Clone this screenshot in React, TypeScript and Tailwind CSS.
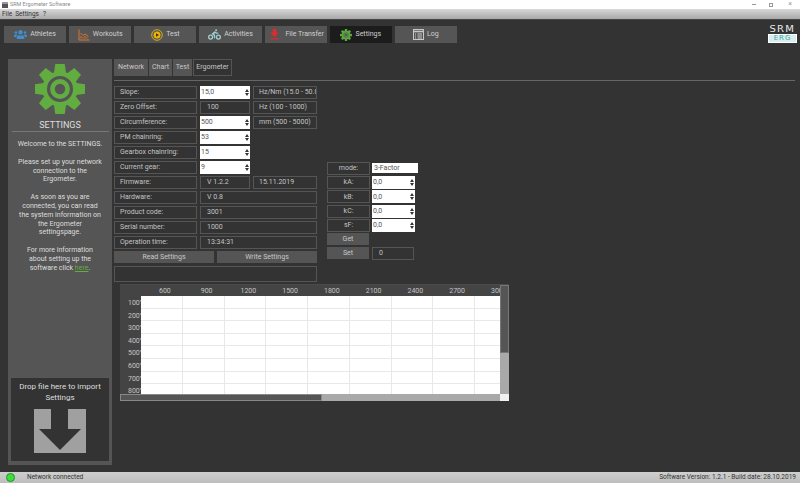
import { ReactNode } from "react";
import { FaUsers, FaBiking } from "react-icons/fa";
import { MdFileDownload } from "react-icons/md";

const font = { fontFamily: 'Roboto, "Noto Sans", sans-serif' };

function Gear({ size, color, stroke }: { size: number; color: string; stroke: number }) {
  const teeth = [0, 45, 90, 135, 180, 225, 270, 315];
  return (
    <svg width={size} height={size} viewBox="0 0 48 48">
      {teeth.map((a) => (
        <path key={a} d="M19.5 0 H28.5 L30 10 H18 Z" fill={color} transform={`rotate(${a} 24 24)`} />
      ))}
      <circle cx="24" cy="24" r="17" fill={color} />
      <circle cx="24" cy="24" r={15 - stroke} fill="none" stroke="#555555" strokeWidth="3" />
      <circle cx="24" cy="24" r="5" fill="#555555" />
    </svg>
  );
}

function WorkoutIcon() {
  return (
    <svg width="12" height="12" viewBox="0 0 12 12" fill="none" stroke="#d9772f" strokeWidth="1">
      <path d="M1 0.5 V11 H11.5" />
      <path d="M2.5 4 L5 6.5 L7 5 L10.5 7.5" />
      <path d="M3 9.5 V7 M5 9.5 V8 M7 9.5 V7 M9 9.5 V8" />
    </svg>
  );
}

function TestIcon() {
  return (
    <svg width="12" height="12" viewBox="0 0 12 12">
      <circle cx="6" cy="6" r="5.3" fill="none" stroke="#eab308" strokeWidth="0.9" />
      <circle cx="6" cy="6" r="3.5" fill="#eab308" />
      <path d="M5 4.2 L8 6 L5 7.8 Z" fill="#333333" />
    </svg>
  );
}

function LogIcon() {
  return (
    <svg width="11" height="11" viewBox="0 0 11 11" fill="none" stroke="#c8c8c8" strokeWidth="1">
      <rect x="0.5" y="0.5" width="10" height="10" />
      <path d="M0.5 2.5 H10.5" strokeWidth="1.6" />
      <path d="M2 5 H3 M4.5 5 H9 M2 7 H3 M4.5 7 H9 M2 9 H3 M4.5 9 H9" />
    </svg>
  );
}

const tabs: { label: string; icon: ReactNode; active?: boolean }[] = [
  { label: "Athletes", icon: <FaUsers size={13} color="#3f8fd0" /> },
  { label: "Workouts", icon: <WorkoutIcon /> },
  { label: "Test", icon: <TestIcon /> },
  { label: "Activities", icon: <FaBiking size={13} color="#9fd0cf" /> },
  { label: "File Transfer", icon: <MdFileDownload size={15} color="#e02b2b" /> },
  { label: "Settings", icon: <Gear size={12} color="#5aa83c" stroke={6} />, active: true },
  { label: "Log", icon: <LogIcon /> },
];

function Cell({ className = "", children }: { className?: string; children?: ReactNode }) {
  return (
    <div className={`h-[13px] border border-[#555555] flex items-center text-[7px] text-[#c4c4c4] whitespace-nowrap overflow-hidden ${className}`}>
      {children}
    </div>
  );
}

function Spin({ value, className = "" }: { value: string; className?: string }) {
  return (
    <div className={`h-[13px] bg-white flex items-center pl-[1px] text-[7px] text-[#555555] ${className}`}>
      <span className="flex-1">{value}</span>
      <span className="w-[4px] mr-[1px] flex flex-col gap-[1px] items-center">
        <span className="w-0 h-0 border-x-[2px] border-x-transparent border-b-[3px] border-b-[#333333]" />
        <span className="w-0 h-0 border-x-[2px] border-x-transparent border-t-[3px] border-t-[#333333]" />
      </span>
    </div>
  );
}

function Row({ label, children }: { label: string; children: ReactNode }) {
  return (
    <div className="flex gap-[3px] h-[13px]">
      <Cell className="w-[83px] pl-[5px]">{label}</Cell>
      {children}
    </div>
  );
}

function RightRow({ label }: { label: string }) {
  return (
    <div className="flex gap-[2px] h-[12.3px]">
      <Cell className="w-[43px] justify-center h-[12.3px]">{label}</Cell>
      <Spin value="0,0" className="w-[43px] h-[12.3px]" />
    </div>
  );
}

const cols = ["600", "900", "1200", "1500", "1800", "2100", "2400", "2700", "3000"];
const rows = ["100%", "200%", "300%", "400%", "500%", "600%", "700%", "800%"];

function Grid() {
  return (
    <div className="ml-[6px] mt-[2px] w-[389px] h-[117px] flex flex-col border-t border-[#4a4a4a]">
      <div className="flex h-[109px]">
        <div className="w-[380px] overflow-hidden bg-[#444444]">
          <div className="flex h-[11px] pl-[21px] text-[7px] text-[#c4c4c4]">
            {cols.map((c) => (
              <div key={c} className="w-[41.75px] shrink-0 text-center pl-[6px] leading-[13px]">{c}</div>
            ))}
          </div>
          {rows.map((r) => (
            <div key={r} className="flex h-[12.6px]">
              <div className="w-[21px] shrink-0 text-[7px] text-[#c4c4c4] leading-[14px] overflow-hidden whitespace-nowrap pl-[8px]">{r}</div>
              <div className="flex bg-white border-b border-[#e8e8e8]">
                {cols.map((c) => (
                  <div key={c} className="w-[41.75px] shrink-0 border-r border-[#e8e8e8]" />
                ))}
              </div>
            </div>
          ))}
        </div>
        <div className="w-[9px] flex flex-col bg-[#a9a9a9]">
          <div className="h-[68px] bg-[#555555] border border-[#777777]" />
        </div>
      </div>
      <div className="flex h-[8px]">
        <div className="w-[380px] bg-[#a9a9a9]">
          <div className="h-full w-[202px] bg-[#555555] border border-[#888888]" />
        </div>
        <div className="w-[9px] bg-[#f0f0f0]" />
      </div>
    </div>
  );
}

function Sidebar() {
  return (
    <aside className="ml-[8px] mt-[15px] w-[104px] h-[406px] bg-[#555555] flex flex-col items-center text-[#dedede] text-[7px] leading-[8.8px] text-center">
      <div className="mt-[5px]">
        <Gear size={50} color="#62ad40" stroke={4} />
      </div>
      <div className="mt-[5px] text-[9px] leading-[12px]">SETTINGS</div>
      <div className="mt-[0px] w-[97px] border-t border-[#777777]" />
      <p className="mt-[8px]">Welcome to the SETTINGS.</p>
      <p className="mt-[9px]">Please set up your network<br />connection to the<br />Ergometer.</p>
      <p className="mt-[9px]">As soon as you are<br />connected, you can read<br />the system information on<br />the Ergometer<br />settingspage.</p>
      <p className="mt-[9px]">For more information<br />about setting up the<br />software click <span className="text-[#62ad40] underline">here</span>.</p>
      <div className="mt-auto mb-[4px] w-[98px] h-[83px] bg-[#333333] flex flex-col items-center">
        <div className="mt-[3px] text-[8px] leading-[11px]">Drop file here to import<br />Settings</div>
        <svg className="mt-[6px]" width="52" height="44" viewBox="0 0 52 44">
          <rect width="52" height="44" fill="#a0a0a0" />
          <path d="M17 0 H34 V20 H47 L26 41 L5 20 H17 Z" fill="#333333" />
        </svg>
      </div>
    </aside>
  );
}

export default function App() {
  return (
    <div className="w-[800px] h-[483px] flex flex-col overflow-hidden bg-[#333333]" style={font}>
      <div className="h-[9px] bg-white flex items-center text-[5.4px] text-[#8a8a8a]">
        <span className="ml-[2px] w-[6px] h-[6px] bg-[#555555] border-t-2 border-[#999999]" />
        <span className="ml-[2px]">SRM Ergometer Software</span>
        <span className="ml-auto mr-[13px] w-[4px] border-t border-[#999999]" />
        <span className="mr-[15px] w-[4px] h-[4px] border border-[#999999]" />
        <span className="mr-[8px] text-[7px] leading-none text-[#999999]">×</span>
      </div>
      <div className="h-[11px] pt-[1px] bg-gradient-to-b from-[#d8d8d8] to-[#a8a8a8] border-b border-[#444444] flex items-center gap-[3px] pl-[2px] text-[6.5px] text-[#333333]">
        <span>File</span>
        <span>Settings</span>
        <span className="ml-[1px]">?</span>
      </div>

      <div className="flex-1 min-h-0 flex flex-col">
        <div className="flex h-[24px] pt-[6px] pl-[4px] gap-[3px]">
          {tabs.map((t) => (
            <div
              key={t.label}
              className={`w-[62.15px] h-[17px] flex items-center justify-center gap-[3px] text-[7px] text-[#d0d0d0] ${t.active ? "bg-[#1c1c1c]" : "bg-[#555555]"}`}
            >
              {t.icon}
              <span>{t.label}</span>
            </div>
          ))}
          <div className="ml-auto mr-[3px] -mt-[1px] w-[29px] flex flex-col items-center" style={{ fontFamily: '"DejaVu Sans", sans-serif' }}>
            <span className="text-[8px] leading-[9px] text-[#e8e8e8] tracking-[1px] scale-x-125">SRM</span>
            <span className="w-full bg-[#d8eeee] border border-white text-center text-[7px] leading-[7px] text-[#4aa8a8] tracking-[1px]">ERG</span>
          </div>
        </div>

        <div className="flex-1 min-h-0 flex">
          <Sidebar />
          <main className="ml-[2px] flex-1 pt-[15px] flex flex-col">
            <div className="flex text-[7px] text-[#c8c8c8] gap-[1px] h-[17px]">
              <div className="w-[34px] bg-[#555555] flex items-center justify-center">Network</div>
              <div className="w-[23px] bg-[#555555] flex items-center justify-center">Chart</div>
              <div className="w-[19px] bg-[#555555] flex items-center justify-center">Test</div>
              <div className="w-[39px] bg-[#333333] border border-[#555555] flex items-center justify-center">Ergometer</div>
            </div>
            <div className="mt-[4px] mr-[5px] border-t border-[#666666]" />

            <div className="mt-[5px] flex items-start">
              <div className="w-[203px] flex flex-col gap-[2px]">
                <Row label="Slope:">
                  <Spin value="15,0" className="w-[50px]" />
                  <Cell className="w-[64px] pl-[5px]">Hz/Nm (15.0 - 50.0)</Cell>
                </Row>
                <Row label="Zero Offset:">
                  <Cell className="w-[50px] pl-[6px]">100</Cell>
                  <Cell className="w-[64px] pl-[5px]">Hz (100 - 1000)</Cell>
                </Row>
                <Row label="Circumference:">
                  <Spin value="500" className="w-[50px]" />
                  <Cell className="w-[64px] pl-[5px]">mm (500 - 5000)</Cell>
                </Row>
                <Row label="PM chainring:"><Spin value="53" className="w-[50px]" /></Row>
                <Row label="Gearbox chainring:"><Spin value="15" className="w-[50px]" /></Row>
                <Row label="Current gear:"><Spin value="9" className="w-[50px]" /></Row>
                <Row label="Firmware:">
                  <Cell className="w-[50px] pl-[6px]">V 1.2.2</Cell>
                  <Cell className="w-[64px] pl-[5px]">15.11.2019</Cell>
                </Row>
                <Row label="Hardware:"><Cell className="w-[117px] pl-[6px]">V 0.8</Cell></Row>
                <Row label="Product code:"><Cell className="w-[117px] pl-[6px]">3001</Cell></Row>
                <Row label="Serial number:"><Cell className="w-[117px] pl-[6px]">1000</Cell></Row>
                <Row label="Operation time:"><Cell className="w-[117px] pl-[6px]">13:34:31</Cell></Row>
                <div className="flex gap-[3px]">
                  <div className="w-[100px] h-[12px] bg-[#555555] text-[7px] text-[#c8c8c8] flex items-center justify-center">Read Settings</div>
                  <div className="w-[100px] h-[12px] bg-[#555555] text-[7px] text-[#c8c8c8] flex items-center justify-center">Write Settings</div>
                </div>
                <div className="mt-[1px] h-[16px] border border-[#555555]" />
              </div>

              <div className="ml-[10px] mt-[76px] w-[91px] flex flex-col gap-[2px]">
                <div className="flex gap-[2px] h-[12px]">
                  <Cell className="w-[43px] justify-center h-[12px]">mode:</Cell>
                  <div className="w-[46px] h-[10px] mt-[1px] bg-white text-[7px] text-[#555555] pl-[2px] leading-[10px]">3-Factor</div>
                </div>
                <RightRow label="kA:" />
                <RightRow label="kB:" />
                <RightRow label="kC:" />
                <RightRow label="sF:" />
                <div className="w-[42px] h-[12px] bg-[#555555] text-[7px] text-[#c8c8c8] flex items-center justify-center">Get</div>
                <div className="flex gap-[3px]">
                  <div className="w-[42px] h-[12px] bg-[#555555] text-[7px] text-[#c8c8c8] flex items-center justify-center">Set</div>
                  <Cell className="w-[42px] h-[12px] pl-[6px]">0</Cell>
                </div>
              </div>
            </div>

            <Grid />
          </main>
        </div>
      </div>

      <div className="h-[11px] bg-gradient-to-b from-[#cfcfcf] to-[#bdbdbd] flex items-center text-[6.5px] text-[#333333]">
        <span className="ml-[6px] w-[9px] h-[9px] rounded-full bg-[#3be03b] border border-[#2a8f2a]" />
        <span className="ml-[12px]">Network connected</span>
        <span className="ml-auto mr-[4px]">Software Version: 1.2.1 - Build date: 28.10.2019</span>
      </div>
    </div>
  );
}
